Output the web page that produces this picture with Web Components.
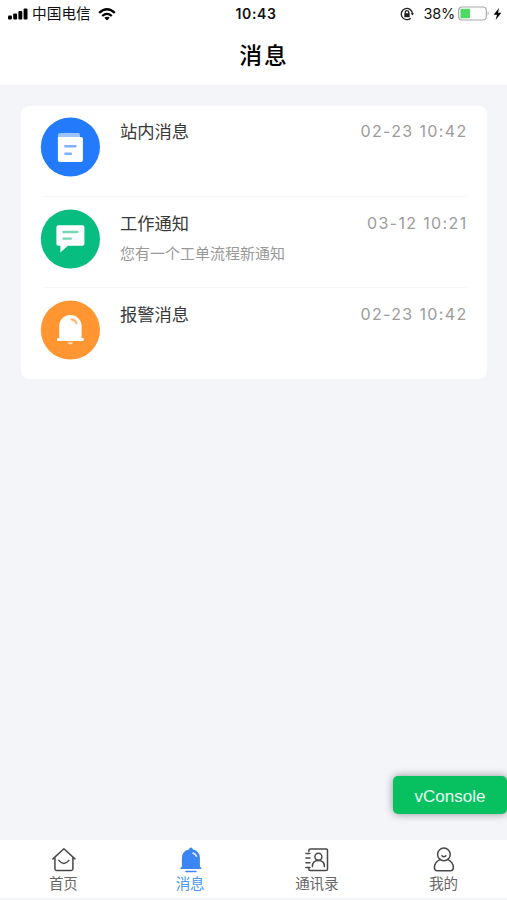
<!DOCTYPE html>
<html lang="zh-CN">
<head>
<meta charset="UTF-8">
<meta name="viewport" content="width=device-width, initial-scale=1">
<title>消息</title>
<style>
    html, body {
        margin: 0;
        height: 100%;
    }
    body {
        font-family: Inter, "Noto Sans CJK SC", sans-serif;
        overflow: hidden;
    }
</style>
</head>
<body>
<message-app></message-app>

<script>
const icons = {
    book: `
        <path d="M17.500 18v2h23q2 0 2 2v21q0 2-2 2h-21q-2 0-2-2z" fill="#fff"/>
        <path d="M17.500 20v-2q0-2 2-2h18.500q1.500 0 1.500 1.500V20z" fill="#9fc3ff"/>
        <path d="M25 29.300h10M25 36.700h5.500" stroke="#7eb0ff" stroke-width="2.500" stroke-linecap="round"/>`,
    chat: `
        <path d="M18 16.300h24q2 0 2 2v16.400q0 2-2 2H27.500L20 43.500v-6.800h-2q-2 0-2-2V18.300q0-2 2-2z" fill="#fff"/>
        <path d="M23 23h14M23 29.700h7.500" stroke="#73d9b5" stroke-width="2.300" stroke-linecap="round"/>`,
    alarm: `
        <path d="M18.800 38V26.200a11.200 11.200 0 0 1 22.400 0V38h.8q1.500 0 1.500 1.500T42 41H18q-1.500 0-1.500-1.500T18 38z" fill="#fff"/>
        <path d="M31.300 19.300q3.700.7 4.700 4" fill="none" stroke="#ffb574" stroke-width="2.200" stroke-linecap="round"/>
        <path d="M27.500 42.300h5q-.5 2.200-2.500 2.200t-2.500-2.200z" fill="#ffe0c3"/>`,
    home: `
        <path d="M2.500 12.500 13.500 2.300 24.500 12.500M4.500 11v11.300q0 1.700 1.700 1.700h14.600q1.700 0 1.700-1.700V11M8.500 14q5 6.300 10 0"/>`,
    bell: `
        <path d="M4.500 20V11.500q0-7 7-8.500.3-2 2-2t2 2q7 1.500 7 8.500V20l1.500 1.500v1H3v-1z" fill="#3c86f4" stroke="none"/>
        <path d="M15.700 6.800q2.500.8 3.300 3" stroke="#d5e6ff" stroke-width="1.800"/>
        <path d="M8.500 25h10" stroke="#3c86f4"/>`,
    contacts: `
        <path d="M5.500 5V3.800q0-1.300 1.300-1.300h16q1.300 0 1.300 1.300v19q0 1.300-1.300 1.300h-16q-1.300 0-1.300-1.300V22M2.500 7h4M2.500 11.700h4M2.500 16.300h4M2.500 21h4"/>
        <circle cx="15" cy="10.300" r="3.500"/>
        <path d="M9 20q0-6 6-6t6 6"/>`,
    mine: `
        <circle cx="13.500" cy="8" r="6.300"/>
        <path d="M9.500 13.200Q4.500 15.300 4 21q0 3.300 3 3.300h13q3 0 3-3.300-.5-5.700-5.500-7.800M11.500 9.300q2 2 4 0"/>`
};

class StatusBar extends HTMLElement {

    constructor() {
        super();
        this.attachShadow({ mode: "open" }).innerHTML = `
            <style>
                :host {
                    display: grid;
                    grid-template-columns: 1fr auto 1fr;
                    align-items: center;
                    height: 28px;
                    padding: 0 5px 0 8px;
                    font-size: 14px;
                    line-height: 28px;
                    color: #111;
                }
                div {
                    display: flex;
                    align-items: center;
                }
                svg {
                    display: block;
                    flex: none;
                }
                .carrier {
                    margin: 0 7px 0 4px;
                    font-size: 14.7px;
                    line-height: 27px;
                }
                b {
                    padding-left: 2px;
                    font-weight: 600;
                    letter-spacing: .6px;
                }
                .right {
                    justify-content: flex-end;
                }
                .percent {
                    margin: 0 3px 0 9px;
                    font-size: 14.5px;
                    letter-spacing: -.2px;
                }
                .battery {
                    margin: 0 1px 2px 0;
                }
            </style>
            <div>
                <svg width="20" height="12" viewBox="0 0 20 12">
                    <rect y="7.500" width="3.900" height="4" rx="1"/>
                    <rect x="5.200" y="5.500" width="3.900" height="6" rx="1"/>
                    <rect x="10.400" y="3" width="3.900" height="8.500" rx="1"/>
                    <rect x="15.600" y=".5" width="3.900" height="11" rx="1"/>
                </svg>
                <span class="carrier">中国电信</span>
                <svg width="18" height="13" viewBox="0 0 18 13" fill="none" stroke="#000" stroke-width="2.300">
                    <path d="M1.200 4.800q7.800-7 15.600 0M4.200 8q4.800-4.300 9.600 0"/>
                    <path d="M6.300 9.800q2.700-2.200 5.400 0L9 12.500z" fill="#000" stroke="none"/>
                </svg>
            </div>
            <b>10:43</b>
            <div class="right">
                <svg width="14" height="14" viewBox="0 0 14 14" fill="none" stroke="#222" stroke-width="1.300">
                    <path d="M10.700 11.200A5.600 5.600 0 1 1 12.500 7"/>
                    <path d="m10.700 6.200 1.800 2.300 1.500-2.300z" fill="#222" stroke="none"/>
                    <rect x="4.300" y="6.200" width="5.400" height="4" fill="#222" stroke="none"/>
                    <path d="M5.300 6.500V5.200q0-1.600 1.700-1.600t1.700 1.600v1.300"/>
                </svg>
                <span class="percent">38%</span>
                <svg class="battery" width="32" height="15" viewBox="0 0 32 15">
                    <rect x=".7" y="1" width="27.600" height="13" rx="3.500" fill="#fff" stroke="#aaa" stroke-width="1.200"/>
                    <rect x="2.500" y="2.700" width="9.500" height="9.600" rx="1" fill="#4cd964"/>
                    <path d="M29.700 5.300q2 2.200 0 4.400z" fill="#aaa"/>
                </svg>
                <svg width="9" height="12" viewBox="0 0 9 12" style="margin-left: 2px">
                    <path d="M6 0 .7 6.800H4L2.700 12l5.600-7.200H5z"/>
                </svg>
            </div>`;
    }
}

class MessageItem extends HTMLElement {

    constructor() {
        super();
        this.attachShadow({ mode: "open" });
    }

    connectedCallback() {
        this.shadowRoot.innerHTML = `
            <style>
                :host {
                    display: flex;
                    box-sizing: border-box;
                    height: 91.5px;
                    padding: 11px 20px 0 19px;
                    background: linear-gradient(#f5f6f7, #f5f6f7) 22px calc(100% - 1px) / calc(100% - 42px) 1px no-repeat;
                }
                :host(:last-child) {
                    background: none;
                }
                svg {
                    display: block;
                    flex: none;
                    width: 60px;
                    height: 60px;
                }
                .content {
                    flex: 1;
                    margin-left: 20px;
                }
                .head {
                    display: flex;
                    justify-content: space-between;
                    height: 28px;
                    line-height: 30px;
                }
                .title {
                    font-size: 17.3px;
                    color: #383838;
                }
                time {
                    font-size: 16px;
                    line-height: 28px;
                    letter-spacing: 1.35px;
                    margin-right: -.5px;
                    color: #9c9c9c;
                }
                .description {
                    margin-top: 5px;
                    font-size: 15px;
                    line-height: 24px;
                    color: #999;
                }
            </style>
            <svg viewBox="0 0 60 60">
                <g transform="translate(.4)">
                    <circle cx="30" cy="30" r="29.600" fill="${this.getAttribute("color")}"/>
                    ${icons[this.getAttribute("icon")]}
                </g>
            </svg>
            <div class="content">
                <div class="head">
                    <span class="title">${this.getAttribute("label")}</span>
                    <time>${this.getAttribute("time")}</time>
                </div>
                <div class="description"><slot></slot></div>
            </div>`;
    }
}

class TabItem extends HTMLElement {

    constructor() {
        super();
        this.attachShadow({ mode: "open" });
    }

    connectedCallback() {
        this.shadowRoot.innerHTML = `
            <style>
                :host {
                    display: flex;
                    flex: 1;
                    flex-direction: column;
                    align-items: center;
                    padding-top: 6px;
                    font-size: 14.5px;
                    line-height: 22px;
                    color: #666;
                }
                :host([active]) {
                    color: #4a98f5;
                }
                svg {
                    display: block;
                    width: 27px;
                    height: 27px;
                    fill: none;
                    stroke: #484848;
                    stroke-width: 1.5;
                    stroke-linecap: round;
                    stroke-linejoin: round;
                }
            </style>
            <svg viewBox="-.4 -.4 27 27">${icons[this.getAttribute("icon")]}</svg>
            <slot></slot>`;
    }
}

class ConsoleButton extends HTMLElement {

    constructor() {
        super();
        this.attachShadow({ mode: "open" }).innerHTML = `
            <style>
                :host {
                    position: absolute;
                    right: 0;
                    bottom: 86px;
                    width: 114px;
                    height: 38px;
                    border-radius: 5px;
                    background: #07c160;
                    box-shadow: 0 0 9px rgba(0, 0, 0, .4);
                    color: #e9fff2;
                    font: 17px/41px "Liberation Sans", sans-serif;
                    text-align: center;
                }
            </style>
            <slot></slot>`;
    }
}

class MessageApp extends HTMLElement {

    constructor() {
        super();
        this.attachShadow({ mode: "open" }).innerHTML = `
            <style>
                :host {
                    position: relative;
                    display: flex;
                    flex-direction: column;
                    height: 100%;
                    background: #f3f5f9;
                }
                header {
                    height: 85px;
                    background: #fff;
                }
                h1 {
                    margin: 0;
                    padding-left: 21px;
                    font-size: 22.8px;
                    font-weight: 500;
                    letter-spacing: 2px;
                    line-height: 55px;
                    text-align: center;
                    color: #000;
                }
                main {
                    flex: 1;
                    padding: 21px 20px 0 21px;
                }
                .list {
                    border-radius: 8px;
                    background: #fff;
                    height: 273px;
                }
                nav {
                    display: flex;
                    box-sizing: border-box;
                    height: 60px;
                    border-bottom: 2px solid #f4f5f7;
                    background: #fff;
                }
            </style>
            <header>
                <status-bar></status-bar>
                <h1>消息</h1>
            </header>
            <main>
                <div class="list">
                    <message-item icon="book" color="#237bfb" label="站内消息" time="02-23 10:42"></message-item>
                    <message-item icon="chat" color="#08bd80" label="工作通知" time="03-12 10:21">您有一个工单流程新通知</message-item>
                    <message-item icon="alarm" color="#ff9632" label="报警消息" time="02-23 10:42"></message-item>
                </div>
            </main>
            <nav>
                <tab-item icon="home">首页</tab-item>
                <tab-item icon="bell" active>消息</tab-item>
                <tab-item icon="contacts">通讯录</tab-item>
                <tab-item icon="mine">我的</tab-item>
            </nav>
            <console-button>vConsole</console-button>`;
    }
}

customElements.define("status-bar", StatusBar);
customElements.define("message-item", MessageItem);
customElements.define("tab-item", TabItem);
customElements.define("console-button", ConsoleButton);
customElements.define("message-app", MessageApp);
</script>
</body>
</html>
